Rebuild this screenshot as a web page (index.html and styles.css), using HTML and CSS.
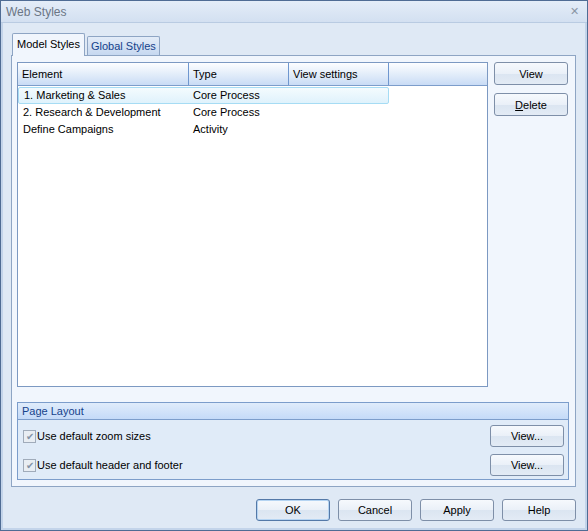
FILE: index.html
```html
<!DOCTYPE html>
<html><head>
<meta charset="utf-8">
<title>Web Styles</title>
<link rel="stylesheet" href="styles.css">
</head>
<body>
<div class="dialog">
 <div class="titlebar">
  <span class="title">Web Styles</span>
  <span class="close">&#x2715;</span>
 </div>
 <div class="client">
  <div class="tabs">
   <div class="tab active">Model Styles</div>
   <div class="tab">Global Styles</div>
  </div>
  <div class="tabpage">
   <div class="toprow">
    <div class="list">
     <div class="listhead">
      <div class="col c1">Element</div>
      <div class="col c2">Type</div>
      <div class="col c3">View settings</div>
      <div class="col rest"></div>
     </div>
     <div class="row selected"><span class="c1">1. Marketing &amp; Sales</span><span class="c2">Core Process</span></div>
     <div class="row"><span class="c1">2. Research &amp; Development</span><span class="c2">Core Process</span></div>
     <div class="row"><span class="c1">Define Campaigns</span><span class="c2">Activity</span></div>
    </div>
    <div class="sidebuttons">
     <button class="btn tall">View</button>
     <button class="btn tall"><u>D</u>elete</button>
    </div>
   </div>
   <div class="group">
    <div class="grouphead">Page Layout</div>
    <div class="optrow">
     <label class="check"><span class="box">&#x2714;</span>Use default zoom sizes</label>
     <button class="btn">View...</button>
    </div>
    <div class="optrow">
     <label class="check"><span class="box">&#x2714;</span>Use default header and footer</label>
     <button class="btn">View...</button>
    </div>
   </div>
  </div>
  <div class="footer">
   <button class="btn default">OK</button>
   <button class="btn">Cancel</button>
   <button class="btn">Apply</button>
   <button class="btn">Help</button>
  </div>
 </div>
</div>
</body></html>
```
FILE: styles.css
```css
html, body{
  margin: 0;
  padding: 0;
}
body{
  width: 588px;
  height: 531px;
  font-family: "Liberation Sans", Arial, sans-serif;
  font-size: 11px;
  color: #000;
}
div.dialog{
  box-sizing: border-box;
  width: 588px;
  height: 531px;
  border: 1px solid #4f6c94;
  background: #dfe9f5;
  display: flex;
  flex-direction: column;
}
div.titlebar{
  height: 21px;
  display: flex;
  align-items: center;
  justify-content: space-between;
  padding: 0 8px 0 5px;
  background: linear-gradient(#e4edf8, #d3e0f1);
  border-bottom: 1px solid #b9cbe2;
}
span.title{
  font-size: 12px;
  color: #6b7685;
}
span.close{
  font-size: 11px;
  color: #8a96a6;
}
div.client{
  flex: 1;
  display: flex;
  flex-direction: column;
  padding: 10px 9px 0 8px;
  border-left: 2px solid #c3d4ea;
  border-right: 2px solid #c3d4ea;
  border-bottom: 2px solid #c3d4ea;
}
div.tabs{
  display: flex;
  align-items: flex-end;
  height: 22px;
  padding-left: 1px;
}
div.tab{
  box-sizing: border-box;
  height: 19px;
  padding: 0 3px;
  line-height: 18px;
  border: 1px solid #8ea5c4;
  border-bottom: none;
  border-radius: 2px 2px 0 0;
  background: linear-gradient(#e3ecf8, #c6d8f0);
  color: #15428b;
  margin-left: 2px;
}
div.tab.active{
  height: 23px;
  line-height: 20px;
  margin-left: 0;
  padding: 0 4px;
  background: #f1f6fd;
  color: #000;
  position: relative;
  top: 1px;
}
div.tabpage{
  flex: 0 0 auto;
  height: 432px;
  box-sizing: border-box;
  border: 1px solid #8ea5c4;
  background: #f1f6fd;
  padding: 6px 6px 6px 5px;
  display: flex;
  flex-direction: column;
}
div.toprow{
  display: flex;
  gap: 6px;
}
div.list{
  box-sizing: border-box;
  width: 471px;
  height: 325px;
  border: 1px solid #7c99c2;
  background: #fff;
}
div.listhead{
  display: flex;
  height: 22px;
  background: linear-gradient(#fdfeff, #c9dcf5);
  border-bottom: 1px solid #7c9dcb;
}
div.col{
  box-sizing: border-box;
  line-height: 22px;
  padding-left: 4px;
  border-right: 1px solid #6f97cf;
}
div.col.rest{
  flex: 1;
  border-right: none;
}
.c1{
  width: 171px;
  flex: 0 0 171px;
}
.c2{
  width: 100px;
  flex: 0 0 100px;
}
.c3{
  width: 100px;
  flex: 0 0 100px;
}
div.row{
  display: flex;
  height: 17px;
  line-height: 17px;
  width: 371px;
  box-sizing: border-box;
}
div.row span{
  box-sizing: border-box;
  padding-left: 5px;
  white-space: nowrap;
}
div.row span.c2{
  padding-left: 4px;
}
div.row.selected{
  margin-top: 1px;
  border: 1px solid #a6dcf4;
  border-radius: 2px;
  background: linear-gradient(#f4fbfe, #dff2fc);
  line-height: 15px;
}
div.row.selected span.c1{
  padding-left: 5px;
  flex-basis: 170px;
  width: 170px;
}
div.sidebuttons{
  display: flex;
  flex-direction: column;
  gap: 8px;
}
button.btn{
  box-sizing: border-box;
  width: 74px;
  height: 22px;
  padding: 0;
  font-family: "Liberation Sans", Arial, sans-serif;
  font-size: 11px;
  color: #000;
  border: 1px solid #7e8fa8;
  border-radius: 3px;
  background: linear-gradient(#f6f9fd 0%, #eaf0f8 50%, #dbe5f1 51%, #e3ebf5 100%);
}
button.btn.tall{
  height: 23px;
}
button.btn.default{
  border-color: #5479a8;
  box-shadow: inset 0 0 0 1px #b5d4f2;
}
div.group{
  margin-top: 15px;
  box-sizing: border-box;
  width: 552px;
  height: 81px;
  border: 1px solid #7c9dcb;
  background: #e0ebf8;
}
div.grouphead{
  height: 16px;
  line-height: 16px;
  padding-left: 4px;
  color: #15428b;
  background: linear-gradient(#e0ecfb, #c4daf8);
  border-bottom: 1px solid #7c9dcb;
}
div.optrow{
  display: flex;
  align-items: center;
  justify-content: space-between;
  height: 22px;
  margin-top: 5px;
  padding: 0 4px 0 5px;
}
div.optrow + div.optrow{
  margin-top: 7px;
}
label.check{
  display: flex;
  align-items: center;
  gap: 1px;
}
span.box{
  box-sizing: border-box;
  width: 13px;
  height: 13px;
  border: 1px solid #a0abba;
  background: #e8edf3;
  color: #8392a6;
  font-size: 10px;
  line-height: 11px;
  text-align: center;
}
div.footer{
  display: flex;
  justify-content: flex-end;
  gap: 8px;
  margin-top: 12px;
}
```
